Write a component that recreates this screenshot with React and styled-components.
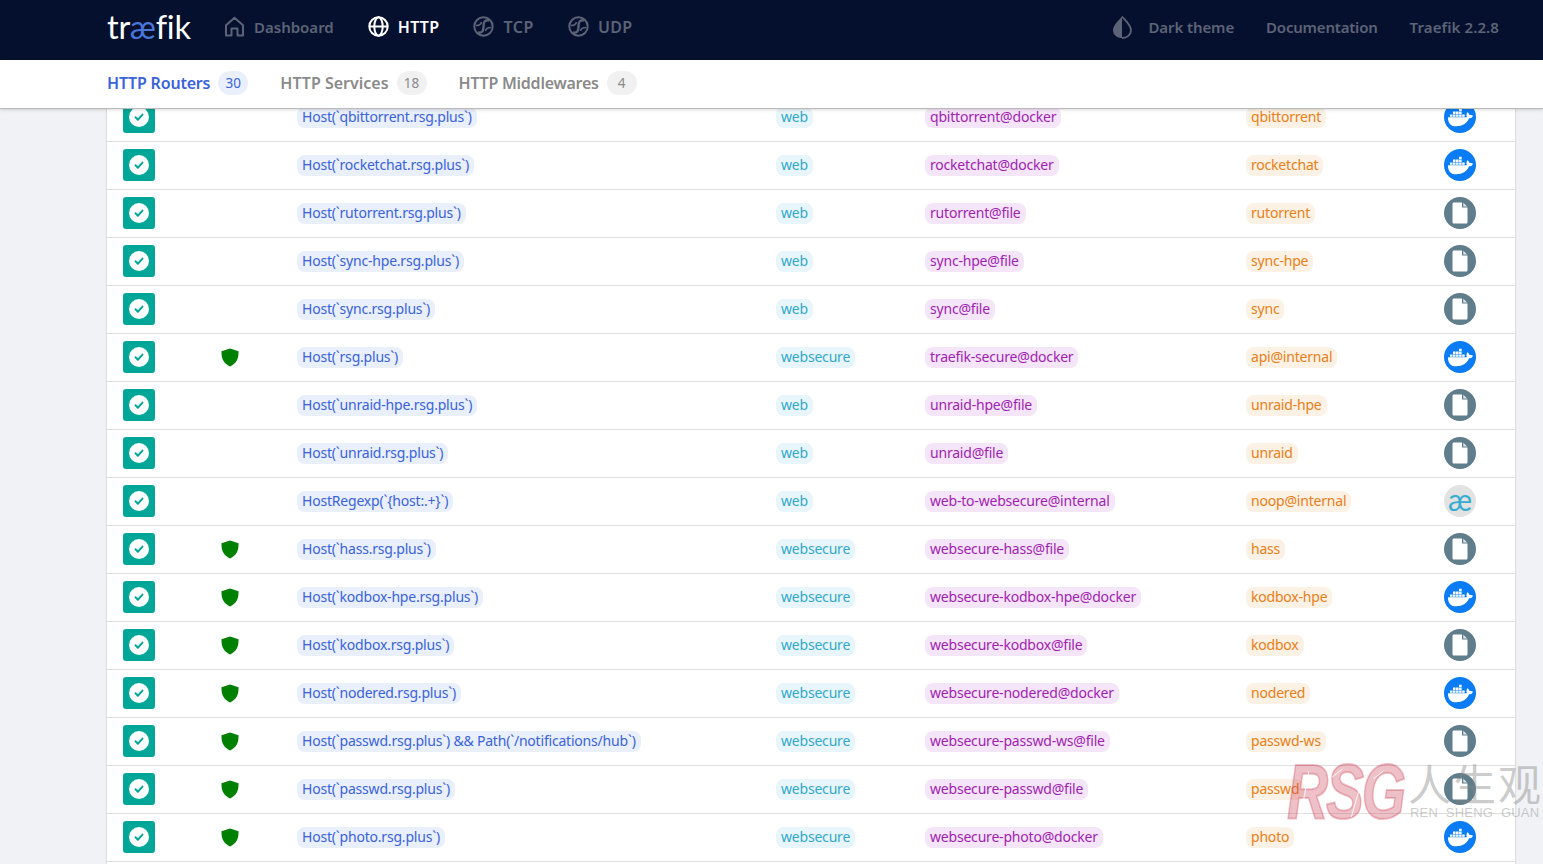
import React from 'react';
import styled, { createGlobalStyle } from 'styled-components';
import { FaDocker } from 'react-icons/fa';

const GlobalStyle = createGlobalStyle`
  html, body {
    margin: 0;
    height: 100%;
    overflow: hidden;
    background: #f1f2f5;
    font-family: 'Noto Sans', 'Liberation Sans', sans-serif;
  }
`;

const Page = styled.div`
  position: relative;
  height: 864px;
  overflow: hidden;
  display: flex;
  flex-direction: column;
`;

const Header = styled.header`
  height: 60px;
  flex: none;
  box-sizing: border-box;
  background: #05102e;
  display: flex;
  align-items: center;
  padding: 0 44px 7px 107px;
  color: #5c6376;
`;

const Logo = styled.div`
  width: 84px;
  margin-right: 33px;
  font-family: 'Lato', sans-serif;
  font-weight: 400;
  font-size: 32.5px;
  font-variant-ligatures: none;
  letter-spacing: -0.2px;
  color: #fff;
  white-space: nowrap;

  span {
    color: #4a76d8;
  }
`;

const NavItem = styled.div`
  display: flex;
  align-items: center;
  gap: 9px;
  margin-right: ${(p) => p.$gap ?? 34}px;
  font-size: ${(p) => p.$size || 15}px;
  font-weight: 600;
  letter-spacing: ${(p) => p.$spacing || 0}px;
  color: ${(p) => (p.$active ? '#fff' : '#5c6376')};
`;

const Spacer = styled.div`
  flex: 1;
`;

const RightLink = styled.div`
  font-size: 15px;
  font-weight: 600;
  letter-spacing: ${(p) => p.$spacing || 0}px;
  margin-left: 32px;
`;

const ThemeToggle = styled.div`
  display: flex;
  align-items: center;
  gap: 16px;
  font-size: 15px;
  font-weight: 600;
  letter-spacing: -0.1px;
`;

const SubNav = styled.nav`
  height: 49px;
  flex: none;
  background: #fff;
  display: flex;
  align-items: center;
  padding: 0 0 3px 107px;
  gap: 32px;
  border-bottom: 1px solid #b9b9b9;
  box-shadow: 0 1px 3px rgba(0, 0, 0, 0.15);
  position: relative;
  z-index: 2;
  box-sizing: border-box;
`;

const Tab = styled.div`
  display: flex;
  align-items: center;
  gap: 8px;
  font-size: 16px;
  font-weight: 600;
  letter-spacing: ${(p) => p.$spacing || 0}px;
  color: ${(p) => (p.$active ? '#3a63d8' : '#8a8a8a')};
`;

const Count = styled.span`
  width: 30px;
  height: 24px;
  border-radius: 12px;
  display: flex;
  align-items: center;
  justify-content: center;
  font-size: 13.5px;
  font-weight: 400;
  letter-spacing: 0;
  background: ${(p) => (p.$active ? '#e9effb' : '#f1f1f1')};
`;

const Main = styled.main`
  flex: 1;
  min-height: 0;
  overflow: hidden;
  padding: 0 28px 0 107px;
`;

const Table = styled.div`
  margin-top: -16px;
  background: #fff;
  box-shadow: 0 0 2px rgba(0, 0, 0, 0.25);
`;

const Row = styled.div`
  height: 48px;
  box-sizing: border-box;
  display: grid;
  grid-template-columns: 74px 66px 513px 149px 321px 198px 1fr;
  align-items: center;
  padding: 0 0 1px 16px;
  border-top: 1px solid #dedede;
`;

const Status = styled.div`
  width: 32px;
  height: 32px;
  border-radius: 3px;
  background: #00a697;
  display: flex;
  align-items: center;
  justify-content: center;
`;

const TlsCell = styled.div`
  display: flex;
  justify-content: center;
`;

const Cell = styled.div`
  display: flex;
  padding-left: ${(p) => p.$inset || 0}px;
`;

const colors = {
  rule: ['#3a63d8', '#e9effb'],
  entry: ['#32a9c9', '#e8f5fa'],
  name: ['#a01fb0', '#f5e5f8'],
  service: ['#e87f17', '#fbf1e4'],
};

const Pill = styled.span`
  height: 21px;
  line-height: 20px;
  padding: 0 5px;
  border-radius: 8px;
  font-size: 14px;
  letter-spacing: -0.2px;
  white-space: nowrap;
  color: ${(p) => colors[p.$kind][0]};
  background: ${(p) => colors[p.$kind][1]};
`;

const Provider = styled.div`
  width: 32px;
  height: 32px;
  border-radius: 50%;
  display: flex;
  align-items: center;
  justify-content: center;
  color: #fff;
  background: ${(p) => p.$bg};
`;

const InternalMark = styled.span`
  font-family: 'Lato', sans-serif;
  font-size: 30px;
  line-height: 28px;
  margin-top: -5px;
  color: #35acd0;
`;

const Watermark = styled.div`
  position: absolute;
  left: 1287px;
  top: 757px;
  width: 256px;
  height: 68px;
  display: flex;
  pointer-events: none;
  z-index: 3;
`;

const WatermarkLogo = styled.div`
  position: relative;
  font-family: 'Liberation Sans', sans-serif;
  font-weight: 700;
  font-style: italic;
  font-size: 78px;
  line-height: 68px;
  letter-spacing: -3px;
  color: rgba(205, 70, 90, 0.34);
  -webkit-text-stroke: 2px rgba(205, 70, 90, 0.34);
  width: 121px;
  flex: none;
  transform: scaleX(0.73);
  transform-origin: left center;
`;

const Scratches = styled.svg`
  position: absolute;
  left: 0;
  top: 0;
  width: 160px;
  height: 68px;
`;

const WatermarkSide = styled.div`
  display: flex;
  flex-direction: column;
  color: rgba(130, 130, 130, 0.42);
  white-space: nowrap;
`;

const WatermarkCjk = styled.div`
  font-family: 'Noto Sans CJK SC', sans-serif;
  font-size: 43px;
  line-height: 50px;
  letter-spacing: 2px;
`;

const WatermarkLatin = styled.div`
  font-family: 'Liberation Sans', sans-serif;
  font-size: 13px;
  line-height: 14px;
  margin-top: -1px;
  padding-left: 2px;
  letter-spacing: 0.2px;
  word-spacing: 4px;
`;

const HomeIcon = () => (
  <svg width="21" height="21" viewBox="0 0 21 21" fill="none" stroke="#5c6376" strokeWidth="2">
    <path d="M2 19.5V9.2L10.5 1.8 19 9.2V19.5H13.5V12.5H7.5V19.5Z" strokeLinejoin="round" />
  </svg>
);

const GlobeIcon = () => (
  <svg width="21" height="21" viewBox="0 0 21 21" fill="none" stroke="#fff" strokeWidth="2">
    <circle cx="10.5" cy="10.5" r="9.2" />
    <ellipse cx="10.5" cy="10.5" rx="4.2" ry="9.2" />
    <path d="M1.5 10.5H19.5" />
  </svg>
);

const SwirlIcon = () => (
  <svg width="21" height="21" viewBox="0 0 21 21" fill="none" stroke="#5c6376" strokeWidth="2">
    <circle cx="10.5" cy="10.5" r="9.2" />
    <path d="M16 4.500C11.500 3.500 10.500 6.500 10.500 10.500S9.500 17.500 5 16.500" strokeWidth="2.4" />
    <path d="M12.500 15C13 12.500 15 11.500 18 11.500" strokeWidth="1.6" />
    <path d="M3 9.500C6 9.500 8 8.500 8.500 6" strokeWidth="1.6" />
  </svg>
);

const DropIcon = () => (
  <svg width="20" height="24" viewBox="0 0 20 24">
    <path d="M10 1.500C6 6 1 10.500 1 15.200 1 19.800 5 23 10 23V1.500Z" fill="#5c6376" />
    <path d="M10 1.500C14 6 19 10.500 19 15.200 19 19.800 15 23 10 23" fill="none" stroke="#5c6376" strokeWidth="1.800" />
  </svg>
);

const CheckIcon = () => (
  <svg width="20" height="20" viewBox="0 0 20 20">
    <circle cx="10" cy="10" r="10" fill="#fff" />
    <path d="M6.500 10.200L9 12.700 13.500 7.600" fill="none" stroke="#00a697" strokeWidth="2" strokeLinecap="round" strokeLinejoin="round" />
  </svg>
);

const ShieldIcon = () => (
  <svg width="18" height="19" viewBox="0 0 18 19">
    <path d="M9 .5L17.500 3.300C17.800 10.500 15.500 15.500 9 18.500 2.500 15.500.2 10.500.5 3.300Z" fill="#008000" />
  </svg>
);

const FileIcon = () => (
  <svg width="16" height="22" viewBox="0 0 16 22">
    <path d="M2 .5H10V5.500H15.500V20C15.500 21 14.800 21.500 14 21.500H2C1.200 21.500.5 21 .5 20V2C.5 1 1.200.5 2 .5Z" fill="#fff" />
    <path d="M11.300.8L15.200 4.500H11.300Z" fill="#e4e8ea" />
  </svg>
);

const ProviderIcon = ({ type }) => {
  if (type === 'docker') {
    return (
      <Provider $bg="#0a7cf5">
        <FaDocker size={25} />
      </Provider>
    );
  }
  if (type === 'file') {
    return (
      <Provider $bg="#607d8b">
        <FileIcon />
      </Provider>
    );
  }
  return (
    <Provider $bg="#e2e2e2">
      <InternalMark>æ</InternalMark>
    </Provider>
  );
};

const host = (h) => `Host(\`${h}\`)`;

const routers = [
  [host('qbittorrent.rsg.plus'), 'web', 'qbittorrent@docker', 'qbittorrent', 'docker', false],
  [host('rocketchat.rsg.plus'), 'web', 'rocketchat@docker', 'rocketchat', 'docker', false],
  [host('rutorrent.rsg.plus'), 'web', 'rutorrent@file', 'rutorrent', 'file', false],
  [host('sync-hpe.rsg.plus'), 'web', 'sync-hpe@file', 'sync-hpe', 'file', false],
  [host('sync.rsg.plus'), 'web', 'sync@file', 'sync', 'file', false],
  [host('rsg.plus'), 'websecure', 'traefik-secure@docker', 'api@internal', 'docker', true],
  [host('unraid-hpe.rsg.plus'), 'web', 'unraid-hpe@file', 'unraid-hpe', 'file', false],
  [host('unraid.rsg.plus'), 'web', 'unraid@file', 'unraid', 'file', false],
  ['HostRegexp(`{host:.+}`)', 'web', 'web-to-websecure@internal', 'noop@internal', 'internal', false],
  [host('hass.rsg.plus'), 'websecure', 'websecure-hass@file', 'hass', 'file', true],
  [host('kodbox-hpe.rsg.plus'), 'websecure', 'websecure-kodbox-hpe@docker', 'kodbox-hpe', 'docker', true],
  [host('kodbox.rsg.plus'), 'websecure', 'websecure-kodbox@file', 'kodbox', 'file', true],
  [host('nodered.rsg.plus'), 'websecure', 'websecure-nodered@docker', 'nodered', 'docker', true],
  [`${host('passwd.rsg.plus')} && Path(\`/notifications/hub\`)`, 'websecure', 'websecure-passwd-ws@file', 'passwd-ws', 'file', true],
  [host('passwd.rsg.plus'), 'websecure', 'websecure-passwd@file', 'passwd', 'file', true],
  [host('photo.rsg.plus'), 'websecure', 'websecure-photo@docker', 'photo', 'docker', true],
];

export default function App() {
  return (
    <Page>
      <GlobalStyle />
      <Header>
        <Logo>
          tr<span>æ</span>fik
        </Logo>
        <NavItem>
          <HomeIcon />
          Dashboard
        </NavItem>
        <NavItem $active $size={16} $spacing={0.3}>
          <GlobeIcon />
          HTTP
        </NavItem>
        <NavItem $size={16} $spacing={0.6}>
          <SwirlIcon />
          TCP
        </NavItem>
        <NavItem $gap={0} $size={16} $spacing={0.3}>
          <SwirlIcon />
          UDP
        </NavItem>
        <Spacer />
        <ThemeToggle>
          <DropIcon />
          Dark theme
        </ThemeToggle>
        <RightLink $spacing={-0.2}>Documentation</RightLink>
        <RightLink $spacing={0.1}>Traefik 2.2.8</RightLink>
      </Header>
      <SubNav>
        <Tab $active $spacing={-0.2}>
          HTTP Routers <Count $active>30</Count>
        </Tab>
        <Tab>
          HTTP Services <Count>18</Count>
        </Tab>
        <Tab $spacing={-0.25}>
          HTTP Middlewares <Count>4</Count>
        </Tab>
      </SubNav>
      <Main>
        <Table>
          {routers.map(([rule, entry, name, service, provider, tls]) => (
            <Row key={name}>
              <Status>
                <CheckIcon />
              </Status>
              <TlsCell>{tls && <ShieldIcon />}</TlsCell>
              <Cell $inset={34}>
                <Pill $kind="rule">{rule}</Pill>
              </Cell>
              <Cell>
                <Pill $kind="entry">{entry}</Pill>
              </Cell>
              <Cell>
                <Pill $kind="name">{name}</Pill>
              </Cell>
              <Cell>
                <Pill $kind="service">{service}</Pill>
              </Cell>
              <ProviderIcon type={provider} />
            </Row>
          ))}
          <Row />
        </Table>
      </Main>
      <Watermark>
        <WatermarkLogo>
          RSG
          <Scratches viewBox="0 0 160 68" fill="none" stroke="#fff" strokeWidth="1">
            <path d="M30 14L18 62M62 20L76 12M88 60L100 30M118 22L132 14M124 46L140 42" />
          </Scratches>
        </WatermarkLogo>
        <WatermarkSide>
          <WatermarkCjk>人生观</WatermarkCjk>
          <WatermarkLatin>REN SHENG GUAN</WatermarkLatin>
        </WatermarkSide>
      </Watermark>
    </Page>
  );
}
